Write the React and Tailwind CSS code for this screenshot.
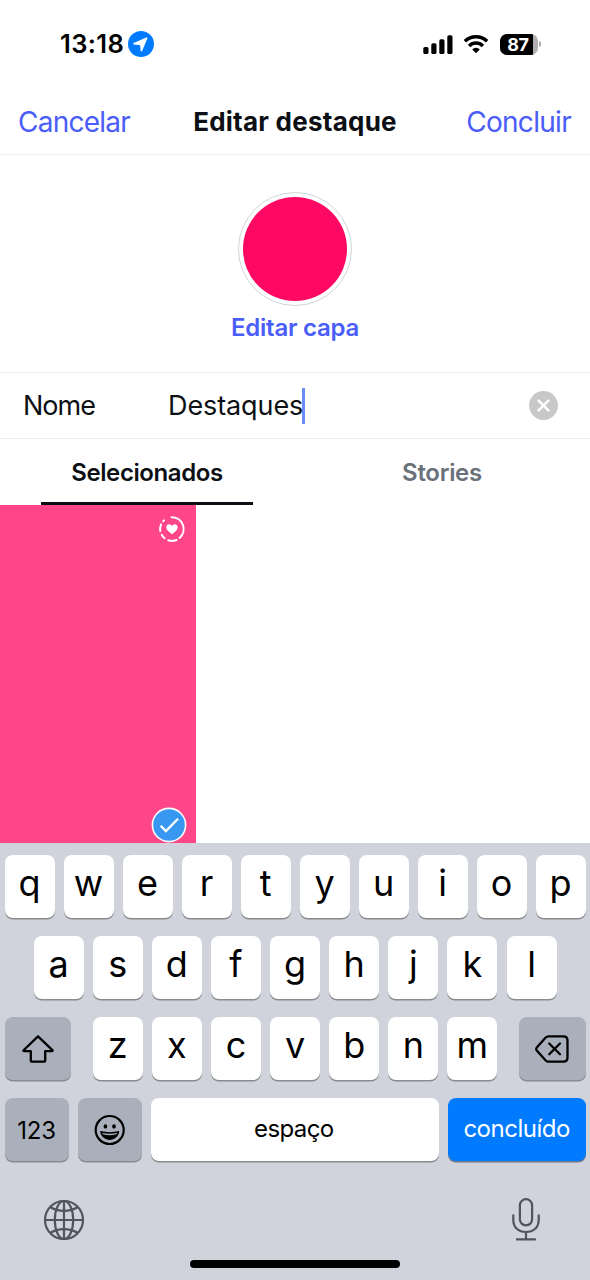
import React, { useState } from 'react';

const ROW_1 = ['q', 'w', 'e', 'r', 't', 'y', 'u', 'i', 'o', 'p'];
const ROW_2 = ['a', 's', 'd', 'f', 'g', 'h', 'j', 'k', 'l'];
const ROW_3 = ['z', 'x', 'c', 'v', 'b', 'n', 'm'];

const LocationIcon = () => (
    <svg width="26" height="26" viewBox="0 0 26 26">
        <circle cx="13" cy="13" r="13" fill="#007aff" />
        <path
            d="M6 12.8 18.6 7.2 13.4 19.6 12.9 13.5Z"
            fill="#fff"
            stroke="#fff"
            strokeWidth="1.6"
            strokeLinejoin="round"
        />
    </svg>
);

const SignalIcon = () => (
    <svg width="30" height="19" viewBox="0 0 30 19">
        <rect x="0.3" y="12" width="5.2" height="7" rx="1.6" />
        <rect x="8.3" y="8.3" width="5.2" height="10.7" rx="1.6" />
        <rect x="16.3" y="4.3" width="5.2" height="14.7" rx="1.6" />
        <rect x="24.3" y="0.3" width="5.2" height="18.7" rx="1.6" />
    </svg>
);

const WifiIcon = () => (
    <svg width="26" height="20" viewBox="0 0 26 20" fill="none" stroke="#000" strokeWidth="3.5">
        <path d="M1.9 7.3a15.8 15.8 0 0 1 22.2 0" />
        <path d="M6.1 11.9a9.8 9.8 0 0 1 13.8 0" />
        <path d="M13 19.2 9.2 15.4a5.4 5.4 0 0 1 7.6 0Z" fill="#000" stroke="none" />
    </svg>
);

const Battery = () => (
    <div className="flex items-center gap-[1px]">
        <div className="flex h-[21px] w-[38px] items-center overflow-hidden rounded-[7px] bg-[#b0b0b0]">
            <div className="flex h-full w-[33px] items-center justify-center bg-black pl-[3px] text-[18px] font-bold tracking-[-0.4px] text-white">
                87
            </div>
        </div>
        <div className="h-[6px] w-[2px] rounded-r-full bg-[#b0b0b0]" />
    </div>
);

const StatusBar = () => (
    <div className="flex h-[88px] items-center justify-between pr-[49px] pl-[60px]">
        <div className="flex items-center gap-[4px]">
            <span className="w-[64px] pt-[1px] text-[25.5px] font-semibold tracking-[0.4px] whitespace-nowrap">13:18</span>
            <LocationIcon />
        </div>
        <div className="flex items-center">
            <SignalIcon />
            <div className="ml-[10px]">
                <WifiIcon />
            </div>
            <div className="ml-[11px]">
                <Battery />
            </div>
        </div>
    </div>
);

const HighlightBadge = () => (
    <svg width="28" height="28" viewBox="0 0 28 28" fill="none">
        <g stroke="#fff" strokeWidth="2" strokeLinecap="round">
            <path d="M13.6 2.2A11.8 11.8 0 0 1 21.6 22.9" />
            <path d="M18.6 25A11.8 11.8 0 0 1 10.2 25.2" />
            <path d="M6.6 23.3A11.8 11.8 0 0 1 3.7 19.8" />
            <path d="M2.3 16A11.8 11.8 0 0 1 3.1 9.3" />
            <path d="M5.2 6.2 6 5.4" />
        </g>
        <path
            d="M14 19.3C11 17 8.3 15 8.3 12.3c0-1.9 1.3-3.1 2.9-3.1 1.2 0 2.2.7 2.8 1.8.6-1.1 1.6-1.8 2.8-1.8 1.6 0 2.9 1.2 2.9 3.1 0 2.7-2.7 4.7-5.7 7Z"
            fill="#fff"
        />
    </svg>
);

const CheckBadge = () => (
    <svg width="36" height="36" viewBox="0 0 36 36" fill="none">
        <circle cx="18" cy="18" r="16.6" fill="#3897f0" stroke="#fff" strokeWidth="1.6" />
        <path d="M9.6 18.7 14.9 24.1 27 11.8" stroke="#fff" strokeWidth="2.3" />
    </svg>
);

const ClearIcon = () => (
    <svg width="29" height="29" viewBox="0 0 29 29">
        <circle cx="14.5" cy="14.5" r="14.4" fill="#c8c8c8" />
        <path d="M9.6 9.6 19.4 19.4M19.4 9.6 9.6 19.4" stroke="#fff" strokeWidth="2.4" strokeLinecap="round" />
    </svg>
);

const ShiftIcon = () => (
    <svg width="34" height="30" viewBox="0 0 34 30" fill="none" stroke="#000" strokeWidth="2.3" strokeLinejoin="round">
        <path d="M17 2.3 31.4 16.2c.5.5.3.9-.4.9H24.2v9.2c0 .9-.5 1.4-1.4 1.4H11.2c-.9 0-1.4-.5-1.4-1.4v-9.2H3c-.7 0-.9-.4-.4-.9Z" />
    </svg>
);

const DeleteIcon = () => (
    <svg width="34" height="30" viewBox="0 0 34 30" fill="none" stroke="#000" strokeWidth="2.3" strokeLinecap="round" strokeLinejoin="round">
        <path d="M13.6 2.3H28.4c2.7 0 4.1 1.4 4.1 4.1v17.2c0 2.7-1.4 4.1-4.1 4.1H13.6c-1.2 0-2.1-.4-2.9-1.2L2.2 17c-1.4-1.4-1.4-2.6 0-4L10.7 3.5c.8-.8 1.7-1.2 2.9-1.2Z" />
        <path d="M14.2 9.5 25 20.3M25 9.5 14.2 20.3" />
    </svg>
);

const EmojiIcon = () => (
    <svg width="32" height="32" viewBox="0 0 32 32" fill="none">
        <circle cx="15.7" cy="16" r="14" stroke="#000" strokeWidth="2.2" />
        <ellipse cx="11.4" cy="12.4" rx="1.8" ry="2.2" fill="#000" />
        <ellipse cx="20" cy="12.4" rx="1.8" ry="2.2" fill="#000" />
        <path
            d="M7 17.1C9.7 17.9 12.7 18.2 15.7 18.2s6-.3 8.7-1.1c.6-.2.9.2.8.7-.7 4.7-4.7 8.2-9.5 8.2s-8.8-3.5-9.5-8.2c-.1-.5.2-.9.8-.7Z"
            fill="#000"
        />
        <path d="M8.1 18.9c4.8 1.1 10.4 1.1 15.2 0-.3.8-.8 1.3-1.5 1.6-4 .9-8.2.9-12.2 0-.7-.3-1.2-.8-1.5-1.6Z" fill="#aab0bb" />
    </svg>
);

const GlobeIcon = () => (
    <svg width="42" height="42" viewBox="0 0 42 42" fill="none" stroke="#50545c" strokeWidth="2.2">
        <circle cx="21" cy="21" r="19" />
        <ellipse cx="21" cy="21" rx="9.2" ry="19" />
        <path d="M21 2V40M2 21H40" />
        <path d="M7.6 8.2C15.5 13 26.5 13 34.4 8.2M7.6 33.8C15.5 29 26.5 29 34.4 33.8" />
    </svg>
);

const MicIcon = () => (
    <svg width="30" height="44" viewBox="0 0 30 44" fill="none" stroke="#50545c" strokeWidth="2.2" strokeLinecap="round">
        <rect x="8.9" y="1.2" width="12.2" height="26.2" rx="6.1" />
        <path d="M2.3 17.4v4.5C2.3 29.4 7.5 34 15 34S27.7 29.4 27.7 21.9V17.4" />
        <path d="M15 34V41.4M6 41.4H24" />
    </svg>
);

const Key = ({ children }) => (
    <button className="flex h-[63px] w-[50px] items-center justify-center rounded-[8px] bg-white pb-[7px] text-[36px] font-normal shadow-[0_1.5px_0_#898a8d]">
        {children}
    </button>
);

const Keyboard = () => (
    <div className="flex h-[437px] flex-col bg-[#d0d3db] pt-[12px] text-black">
        <div className="flex flex-col gap-[18px] pr-[4.4px] pl-[4.6px]">
            <div className="flex justify-between">
                {ROW_1.map((k) => <Key key={k}>{k}</Key>)}
            </div>
            <div className="flex justify-between px-[29px]">
                {ROW_2.map((k) => <Key key={k}>{k}</Key>)}
            </div>
            <div className="flex justify-between">
                <button className="flex h-[63px] w-[66.5px] items-center justify-center rounded-[8px] bg-[#aab0bb] shadow-[0_1.5px_0_#898a8d]">
                    <ShiftIcon />
                </button>
                <div className="flex gap-[9.1px]">
                    {ROW_3.map((k) => <Key key={k}>{k}</Key>)}
                </div>
                <button className="flex h-[63px] w-[66.5px] items-center justify-center rounded-[8px] bg-[#aab0bb] shadow-[0_1.5px_0_#898a8d]">
                    <DeleteIcon />
                </button>
            </div>
            <div className="flex h-[63px] gap-[9px] text-[24px]">
                <button className="flex w-[64px] items-center justify-center rounded-[8px] bg-[#aab0bb] pt-[2px] shadow-[0_1.5px_0_#898a8d]">
                    <span className="tracking-[-0.1px]">123</span>
                </button>
                <button className="flex w-[64.5px] items-center justify-center rounded-[8px] bg-[#aab0bb] shadow-[0_1.5px_0_#898a8d]">
                    <EmojiIcon />
                </button>
                <button className="flex flex-1 items-center justify-center rounded-[8px] bg-white pr-[2px] pb-[2px] shadow-[0_1.5px_0_#898a8d]">
                    <span className="tracking-[-0.6px]">espaço</span>
                </button>
                <button className="flex w-[138px] items-center justify-center rounded-[8px] bg-[#007aff] pb-[2px] text-white shadow-[0_1.5px_0_#6f7787]">
                    <span className="tracking-[-0.5px]">concluído</span>
                </button>
            </div>
        </div>
        <div className="mt-[37px] flex items-center justify-between pr-[49px] pl-[43px]">
            <GlobeIcon />
            <MicIcon />
        </div>
        <div className="mx-auto mt-auto mb-[12px] h-[8px] w-[210px] rounded-full bg-black" />
    </div>
);

const App = () => {
    const [name, setName] = useState('Destaques');
    const [tab, setTab] = useState('selected');

    return (
        <div className="flex h-[1280px] w-[590px] flex-col overflow-hidden bg-white font-['Inter',sans-serif] text-[#0c1014]">
            <div className="text-black">
                <StatusBar />
            </div>

            <header className="grid h-[67px] grid-cols-[1fr_auto_1fr] items-center border-b border-[#f0f1f2] px-[18px] text-[28px]">
                <button className="justify-self-start pt-[1px] tracking-[-0.75px] text-[#4a5df9]">Cancelar</button>
                <h1 className="text-[26px] font-bold tracking-[0.25px]">Editar destaque</h1>
                <button className="mr-[1px] justify-self-end pt-[1px] tracking-[-0.7px] text-[#4a5df9]">Concluir</button>
            </header>

            <section className="flex h-[218px] flex-col items-center border-b border-[#e9edef] pt-[37px]">
                <div className="flex size-[114px] items-center justify-center rounded-full border border-[#cfd5da]">
                    <div className="size-[104px] rounded-full bg-[#fd0964]" />
                </div>
                <button className="mt-[4px] text-[24px] leading-9 font-semibold tracking-[-0.25px] text-[#4a5df9]">Editar capa</button>
            </section>

            <section className="flex h-[66px] items-center border-b border-[#e9edef] pr-[32px] pl-[23px] text-[27px]">
                <label className="w-[145px] pt-[2px] tracking-[-1px]">Nome</label>
                <div className="flex flex-1 items-center">
                    <span className="pt-[2px] tracking-[-0.1px]">{name}</span>
                    <span className="-ml-[1px] h-[36px] w-[3px] bg-[#6c8cf8]" />
                </div>
                <button onClick={() => setName('')}>
                    <ClearIcon />
                </button>
            </section>

            <nav className="grid h-[66px] grid-cols-2 text-[24px] font-semibold">
                <button className="flex flex-col items-center" onClick={() => setTab('selected')}>
                    <span className="flex h-[63px] items-center pt-[5px] pr-[1px] tracking-[-0.4px]">Selecionados</span>
                    <span className={tab === 'selected' ? 'mr-[1px] h-[3px] w-[212px] bg-[#0c1014]' : 'hidden'} />
                </button>
                <button className="flex flex-col items-center text-[#6a717a]" onClick={() => setTab('stories')}>
                    <span className="flex h-[63px] items-center pt-[5px] pr-[1px] tracking-[-0.3px]">Stories</span>
                    <span className={tab === 'stories' ? 'h-[3px] w-[212px] bg-[#0c1014]' : 'hidden'} />
                </button>
            </nav>

            <main className="flex h-[338px]">
                <div className="flex w-[196px] flex-col items-end justify-between bg-[#ff4689] pt-[10px] pr-[9px]">
                    <div className="mr-[1px]">
                        <HighlightBadge />
                    </div>
                    <CheckBadge />
                </div>
            </main>

            <Keyboard />
        </div>
    );
};

export default App;
